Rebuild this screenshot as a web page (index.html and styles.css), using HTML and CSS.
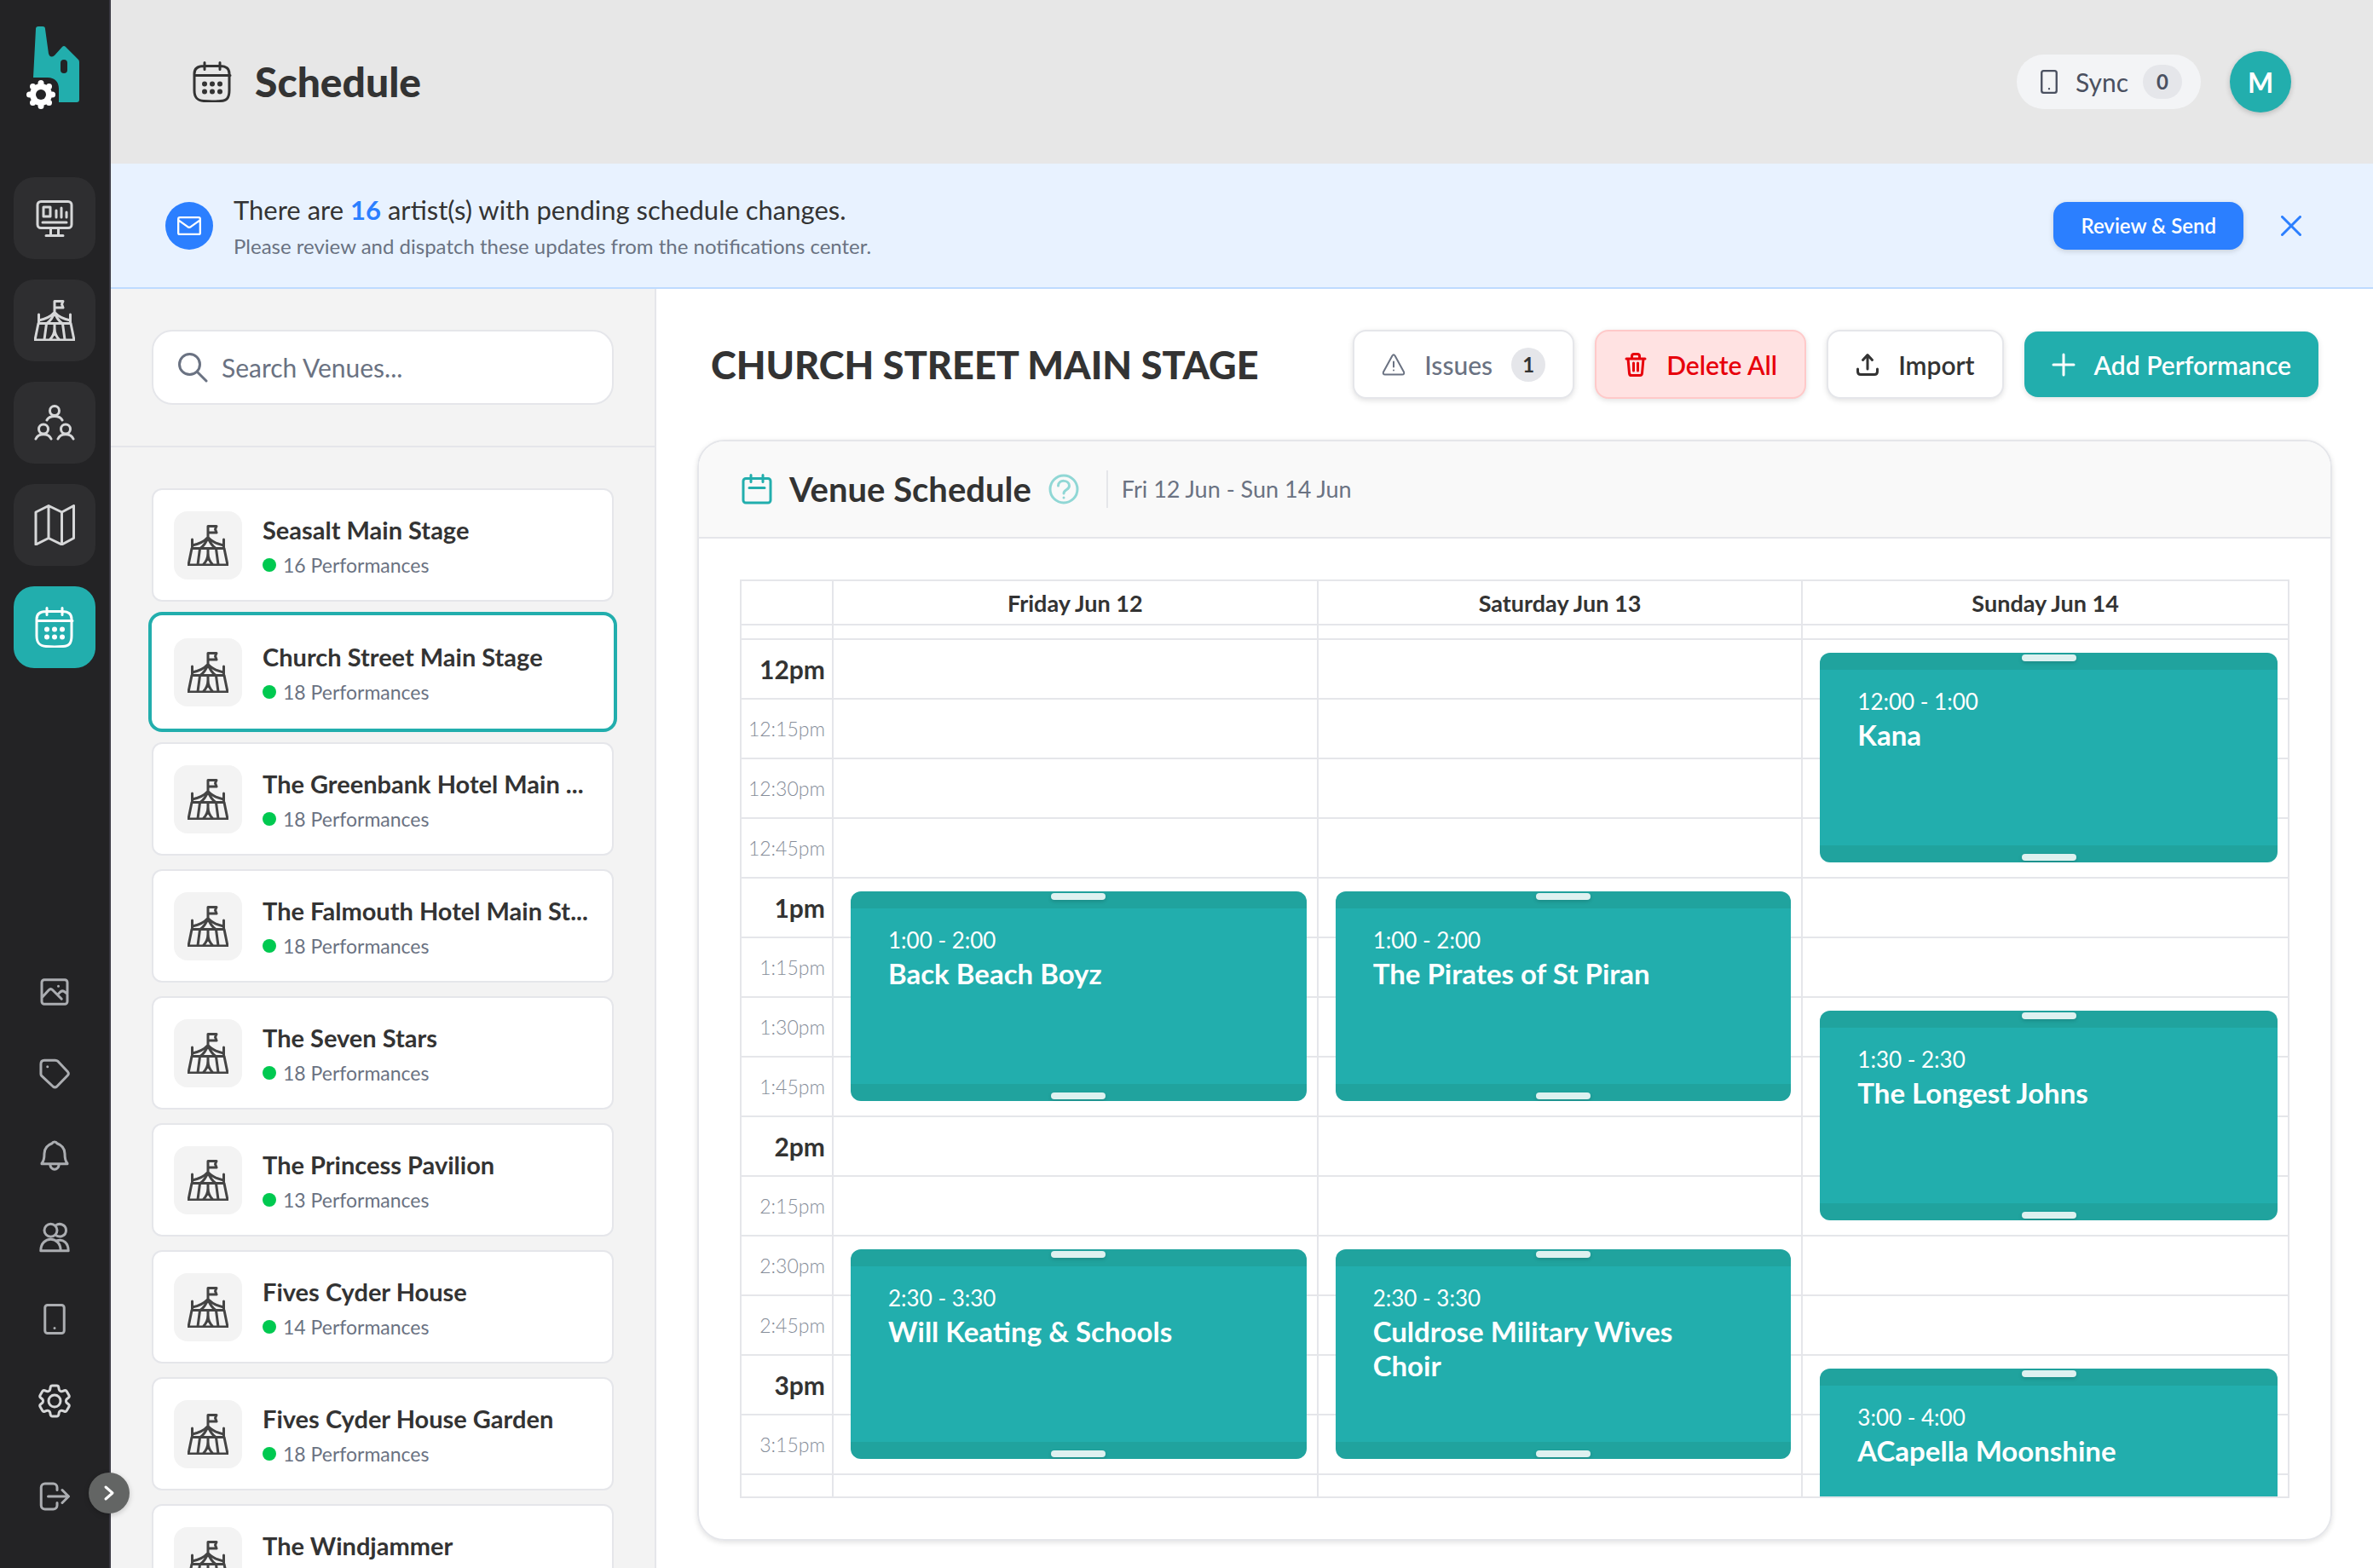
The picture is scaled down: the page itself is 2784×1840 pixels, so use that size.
FILE: index.html
```html
<!DOCTYPE html>
<html lang="en">

<head>
    <meta charset="UTF-8">
    <meta name="viewport" content="width=device-width, initial-scale=1.0">
    <title>Schedule</title>
    <link rel="stylesheet" href="styles.css">
</head>

<body>
    <!-- Shared icons -->
    <svg class="icon-defs" aria-hidden="true">
        <symbol id="icon-tent" viewBox="0 0 48 48">
            <path d="M24 15V1.500h10l-1.500 3.500 1.500 4H24M5.500 17v10.500M42.500 17v10.500M24 14.500c-4 4.500-11 8-18.500 9.500M24 14.500c4 4.500 11 8 18.500 9.500M24 14.500c-2 6-5 10-9 13M24 14.500c2 6 5 10 9 13M5 27.500h38l4 19.500H1zM14.500 28L12 46.500M33.500 28L36 46.500M24 28v6M24 33c0 5-2 10-5.500 13.500M24 33c0 5 2 10 5.500 13.500" />
        </symbol>
        <symbol id="icon-calendar" viewBox="0 0 48 48">
            <path d="M14 5.500h20c6 0 10 3 10 9V34c0 9-3 12-10 12.500-6 .6-14 .6-20 0C7 46 3 43 3 34V14.500c0-6 4-9 11-9zM3 16.500h42M15 1.500v8M33 1.500v8" />
            <path class="dots" d="M15 26.500h.01M24 26.500h.01M33 26.500h.01M15 35.500h.01M24 35.500h.01M33 35.500h.01" />
        </symbol>
        <symbol id="icon-tablet" viewBox="0 0 24 24">
            <path d="M6.500 1h11a2 2 0 0 1 2 2v18a2 2 0 0 1-2 2h-11a2 2 0 0 1-2-2V3a2 2 0 0 1 2-2zM12 19h.01" />
        </symbol>
    </svg>

    <aside class="sidebar">
        <a href="#" class="logo" aria-label="Home">
            <svg viewBox="0 0 64 98">
                <path fill="#22aead" d="M12 3q0-3 3-3h5q3 0 3 3l4 29q2 6 7 2l9-10q2-2 4 0l15 15q1 1 1 3v44q0 3-3 3H39V73C39 65 34 60 26 60H9z" />
                <rect x="41" y="39" width="8" height="16" rx="4" fill="#232325" />
                <g fill="#fff">
                    <circle cx="18" cy="66.500" r="3.500" />
                    <circle cx="27.500" cy="70.500" r="3.500" />
                    <circle cx="31.500" cy="80" r="3.500" />
                    <circle cx="27.500" cy="89.500" r="3.500" />
                    <circle cx="18" cy="93.500" r="3.500" />
                    <circle cx="8.500" cy="89.500" r="3.500" />
                    <circle cx="4.500" cy="80" r="3.500" />
                    <circle cx="8.500" cy="70.500" r="3.500" />
                    <circle cx="18" cy="80" r="13" />
                </g>
                <circle cx="18" cy="80" r="6" fill="#232325" />
            </svg>
        </a>
        <nav class="main-nav">
            <a href="#" class="nav-btn" aria-label="Dashboard">
                <svg viewBox="0 0 48 48">
                    <path d="M8 4.500h32a4 4 0 0 1 4 4v23a4 4 0 0 1-4 4H8a4 4 0 0 1-4-4v-23a4 4 0 0 1 4-4zM11 11h8v11h-8zM26 15v8M32 12v11M38 17v6M10 29h28M19.500 36v8M28.500 36v8M14 44.500h20" />
                </svg>
            </a>
            <a href="#" class="nav-btn" aria-label="Venues"><svg><use href="#icon-tent" /></svg></a>
            <a href="#" class="nav-btn" aria-label="Artists">
                <svg viewBox="0 0 48 48">
                    <circle cx="24" cy="10" r="5.500" />
                    <circle cx="11" cy="31.500" r="5.500" />
                    <circle cx="37" cy="31.500" r="5.500" />
                    <path d="M15 21c3-6 15-6 18 0M2 43c3-7 15-7 18 0M28 43c3-7 15-7 18 0" />
                </svg>
            </a>
            <a href="#" class="nav-btn" aria-label="Map">
                <svg viewBox="0 0 48 48">
                    <path d="M2 9l15-7.500 15.500 7.500L46.500 1.500v38L32.500 47 17 39.500 2 47zM17 1.500v38M32.500 9v38" />
                </svg>
            </a>
            <a href="#" class="nav-btn active" aria-label="Schedule"><svg><use href="#icon-calendar" /></svg></a>
        </nav>
        <nav class="tool-nav">
            <a href="#" aria-label="Media">
                <svg viewBox="0 0 24 24">
                    <path d="M4 2.500h16a2 2 0 0 1 2 2v15a2 2 0 0 1-2 2H4a2 2 0 0 1-2-2v-15a2 2 0 0 1 2-2zM2.500 16l5-5.500q1.500-1.500 3 0l7 7M14.500 14l2-2q2-1.500 3.500 0l2 1.500M15 7.500h.01" />
                </svg>
            </a>
            <a href="#" aria-label="Tags">
                <svg viewBox="0 0 24 24">
                    <path d="M4 1.500h8.500c1 0 1.500.2 2.200.8l7.500 8c.9 1 .9 2 0 3l-8.400 8.700c-1 .8-2 .8-3 0L2 13.800c-.5-.5-.7-1-.7-1.700V4.500c0-2 1-3 2.700-3zM6.500 6.500h.01" />
                </svg>
            </a>
            <a href="#" aria-label="Notifications">
                <svg viewBox="0 0 24 24">
                    <path d="M10 2.500c.7-1.500 3.300-1.500 4 0 4 1.500 6 4.500 6 8 0 3.500.3 6 2 7.500v.5H2V18c1.700-1.500 2-4 2-7.500 0-3.500 2-6.500 6-8zM8.500 19c.5 5 6.500 5 7 0" />
                </svg>
            </a>
            <a href="#" aria-label="Users">
                <svg viewBox="0 0 24 24">
                    <circle cx="9" cy="6.500" r="5" />
                    <path d="M1.200 22.500c0-12 15.600-12 15.600 0zM13 2.600c3-2.200 8-.5 8 3.900s-5 6-8 3.900M14 14.500c5-1.500 8.800 2 8.800 8H17" />
                </svg>
            </a>
            <a href="#" aria-label="Devices"><svg><use href="#icon-tablet" /></svg></a>
            <a href="#" class="settings" aria-label="Settings">
                <svg viewBox="0 0 24 24">
                    <path d="M9.594 3.940c.090-.542.560-.940 1.110-.940h2.593c.550 0 1.020.398 1.110.940l.213 1.281c.063.374.313.686.645.870.074.040.147.083.220.127.325.196.720.257 1.075.124l1.217-.456a1.125 1.125 0 0 1 1.370.490l1.296 2.247a1.125 1.125 0 0 1-.260 1.431l-1.003.827c-.293.241-.438.613-.430.992a7.723 7.723 0 0 1 0 .255c-.008.378.137.750.430.991l1.004.827c.424.350.534.955.260 1.430l-1.298 2.247a1.125 1.125 0 0 1-1.369.491l-1.217-.456c-.355-.133-.750-.072-1.076.124a6.470 6.470 0 0 1-.220.128c-.331.183-.581.495-.644.869l-.213 1.281c-.090.543-.560.940-1.110.940h-2.594c-.550 0-1.019-.398-1.110-.940l-.213-1.281c-.062-.374-.312-.686-.644-.870a6.520 6.520 0 0 1-.220-.127c-.325-.196-.720-.257-1.076-.124l-1.217.456a1.125 1.125 0 0 1-1.369-.490l-1.297-2.247a1.125 1.125 0 0 1 .260-1.431l1.004-.827c.292-.240.437-.613.430-.991a6.932 6.932 0 0 1 0-.255c.007-.380-.138-.751-.430-.992l-1.004-.827a1.125 1.125 0 0 1-.260-1.430l1.297-2.247a1.125 1.125 0 0 1 1.370-.491l1.216.456c.356.133.751.072 1.076-.124.072-.044.146-.086.220-.128.332-.183.582-.495.644-.869l.214-1.280Z" />
                    <circle cx="12" cy="12" r="3.500" />
                </svg>
            </a>
        </nav>
        <div class="sidebar-footer">
            <a href="#" aria-label="Log out">
                <svg viewBox="0 0 24 24">
                    <path d="M14 7V5a3 3 0 0 0-3-3H4.500a3 3 0 0 0-3 3v14a3 3 0 0 0 3 3H11a3 3 0 0 0 3-3v-2M7 12h15.500M18 7l5 5-5 5" />
                </svg>
            </a>
            <button type="button" class="expand-btn" aria-label="Expand menu">
                <svg viewBox="0 0 24 24"><path d="M8 5l8 7-8 7" /></svg>
            </button>
        </div>
    </aside>

    <div class="page">
        <header class="top-bar">
            <svg class="top-icon"><use href="#icon-calendar" /></svg>
            <h1>Schedule</h1>
            <button type="button" class="sync-btn">
                <svg><use href="#icon-tablet" /></svg>
                Sync
                <span class="sync-count">0</span>
            </button>
            <button type="button" class="avatar">M</button>
        </header>

        <section class="banner">
            <span class="banner-icon">
                <svg viewBox="0 0 24 24"><path d="M2.500 3.500h19a1.500 1.500 0 0 1 1.500 1.500v14a1.500 1.500 0 0 1-1.500 1.500h-19A1.500 1.500 0 0 1 1 19V5a1.500 1.500 0 0 1 1.500-1.500zM1.500 6.500l9 6.500q1.500 1 3 0l9-6.500" /></svg>
            </span>
            <div class="banner-text">
                <p class="banner-title">There are <strong>16</strong> artist(s) with pending schedule changes.</p>
                <p class="banner-sub">Please review and dispatch these updates from the notifications center.</p>
            </div>
            <button type="button" class="review-btn">Review &amp; Send</button>
            <button type="button" class="close-btn" aria-label="Dismiss">
                <svg viewBox="0 0 24 24"><path d="M1.500 1.500l21 21M22.500 1.500l-21 21" /></svg>
            </button>
        </section>

        <div class="content">
            <section class="venues">
                <div class="venue-search">
                    <label class="search-box">
                        <svg viewBox="0 0 36 36"><circle cx="14.500" cy="14.500" r="12" /><path d="M23.500 23.500L34 34" /></svg>
                        <input type="text" placeholder="Search Venues..." aria-label="Search venues">
                    </label>
                </div>
                <ul class="venue-list">
                    <li><a href="#" class="venue-card"><span class="venue-icon"><svg><use href="#icon-tent" /></svg></span><span class="venue-info"><span class="venue-name">Seasalt Main Stage</span><span class="venue-count">16 Performances</span></span></a></li>
                    <li><a href="#" class="venue-card selected"><span class="venue-icon"><svg><use href="#icon-tent" /></svg></span><span class="venue-info"><span class="venue-name">Church Street Main Stage</span><span class="venue-count">18 Performances</span></span></a></li>
                    <li><a href="#" class="venue-card"><span class="venue-icon"><svg><use href="#icon-tent" /></svg></span><span class="venue-info"><span class="venue-name">The Greenbank Hotel Main ...</span><span class="venue-count">18 Performances</span></span></a></li>
                    <li><a href="#" class="venue-card"><span class="venue-icon"><svg><use href="#icon-tent" /></svg></span><span class="venue-info"><span class="venue-name">The Falmouth Hotel Main St...</span><span class="venue-count">18 Performances</span></span></a></li>
                    <li><a href="#" class="venue-card"><span class="venue-icon"><svg><use href="#icon-tent" /></svg></span><span class="venue-info"><span class="venue-name">The Seven Stars</span><span class="venue-count">18 Performances</span></span></a></li>
                    <li><a href="#" class="venue-card"><span class="venue-icon"><svg><use href="#icon-tent" /></svg></span><span class="venue-info"><span class="venue-name">The Princess Pavilion</span><span class="venue-count">13 Performances</span></span></a></li>
                    <li><a href="#" class="venue-card"><span class="venue-icon"><svg><use href="#icon-tent" /></svg></span><span class="venue-info"><span class="venue-name">Fives Cyder House</span><span class="venue-count">14 Performances</span></span></a></li>
                    <li><a href="#" class="venue-card"><span class="venue-icon"><svg><use href="#icon-tent" /></svg></span><span class="venue-info"><span class="venue-name">Fives Cyder House Garden</span><span class="venue-count">18 Performances</span></span></a></li>
                    <li><a href="#" class="venue-card"><span class="venue-icon"><svg><use href="#icon-tent" /></svg></span><span class="venue-info"><span class="venue-name">The Windjammer</span></span></a></li>
                </ul>
            </section>

            <main class="main">
                <div class="toolbar">
                    <h2>CHURCH STREET MAIN STAGE</h2>
                    <button type="button" class="btn btn-issues">
                        <svg viewBox="0 0 28 28"><path d="M12.400 3.500q1.600-2.500 3.200 0L26 22.500q1 3-2 3H4q-3 0-2-3zM14 10.500v6M14 20.500h.01" /></svg>
                        Issues
                        <span class="issue-count">1</span>
                    </button>
                    <button type="button" class="btn btn-delete">
                        <svg viewBox="0 0 28 28"><path d="M3 7h22M5 7l1.500 17q.2 2.500 2.500 2.500h10q2.300 0 2.500-2.500L23 7M9.500 6.500V4q0-2.500 2.500-2.500h4q2.500 0 2.500 2.500v2.500M11.500 12v9M16.500 12v9" /></svg>
                        Delete All
                    </button>
                    <button type="button" class="btn">
                        <svg viewBox="0 0 28 28"><path d="M14 19V3M8.500 8.500L14 2.500l5.500 6M2.500 19v3q0 3.500 3.500 3.500h16q3.500 0 3.500-3.500v-3" /></svg>
                        Import
                    </button>
                    <button type="button" class="btn btn-add">
                        <svg viewBox="0 0 28 28"><path d="M14 2v24M2 14h24" /></svg>
                        Add Performance
                    </button>
                </div>

                <section class="panel">
                    <div class="panel-header">
                        <svg class="panel-icon" viewBox="0 0 36 36"><path d="M5 5.500h26a3 3 0 0 1 3 3V31a3 3 0 0 1-3 3H5a3 3 0 0 1-3-3V8.500a3 3 0 0 1 3-3zM11 1.500v8M25 1.500v8M9 16.500h18" /></svg>
                        <h3>Venue Schedule</h3>
                        <button type="button" class="help-btn" aria-label="Help">
                            <svg viewBox="0 0 36 36"><circle cx="18" cy="18" r="16" /><path d="M11.500 14c0-8 13-7 13 0 0 5-6.500 4.500-6.500 9M18 28h.01" /></svg>
                        </button>
                        <p class="panel-dates">Fri 12 Jun - Sun 14 Jun</p>
                    </div>
                    <div class="panel-body">
                        <div class="calendar">
                            <table>
                                <thead>
                                    <tr>
                                        <th class="time-col"></th>
                                        <th>Friday Jun 12</th>
                                        <th>Saturday Jun 13</th>
                                        <th>Sunday Jun 14</th>
                                    </tr>
                                </thead>
                                <tbody>
                                    <tr class="partial"><th></th><td></td><td></td><td></td></tr>
                                    <tr>
                                        <th class="hour">12pm</th><td></td><td></td>
                                        <td><div class="event"><span class="event-time">12:00 - 1:00</span><strong>Kana</strong></div></td>
                                    </tr>
                                    <tr><th>12:15pm</th><td></td><td></td><td></td></tr>
                                    <tr><th>12:30pm</th><td></td><td></td><td></td></tr>
                                    <tr><th>12:45pm</th><td></td><td></td><td></td></tr>
                                    <tr>
                                        <th class="hour">1pm</th>
                                        <td><div class="event"><span class="event-time">1:00 - 2:00</span><strong>Back Beach Boyz</strong></div></td>
                                        <td><div class="event"><span class="event-time">1:00 - 2:00</span><strong>The Pirates of St Piran</strong></div></td>
                                        <td></td>
                                    </tr>
                                    <tr><th>1:15pm</th><td></td><td></td><td></td></tr>
                                    <tr>
                                        <th>1:30pm</th><td></td><td></td>
                                        <td><div class="event"><span class="event-time">1:30 - 2:30</span><strong>The Longest Johns</strong></div></td>
                                    </tr>
                                    <tr><th>1:45pm</th><td></td><td></td><td></td></tr>
                                    <tr><th class="hour">2pm</th><td></td><td></td><td></td></tr>
                                    <tr><th>2:15pm</th><td></td><td></td><td></td></tr>
                                    <tr>
                                        <th>2:30pm</th>
                                        <td><div class="event"><span class="event-time">2:30 - 3:30</span><strong>Will Keating &amp; Schools</strong></div></td>
                                        <td><div class="event"><span class="event-time">2:30 - 3:30</span><strong>Culdrose Military Wives Choir</strong></div></td>
                                        <td></td>
                                    </tr>
                                    <tr><th>2:45pm</th><td></td><td></td><td></td></tr>
                                    <tr>
                                        <th class="hour">3pm</th><td></td><td></td>
                                        <td><div class="event"><span class="event-time">3:00 - 4:00</span><strong>ACapella Moonshine</strong></div></td>
                                    </tr>
                                    <tr><th>3:15pm</th><td></td><td></td><td></td></tr>
                                    <tr><th></th><td></td><td></td><td></td></tr>
                                </tbody>
                            </table>
                        </div>
                    </div>
                </section>
            </main>
        </div>
    </div>
</body>

</html>
```

FILE: styles.css
```css
* {
    box-sizing: border-box;
}

body {
    margin: 0;
    height: 100vh;
    display: flex;
    overflow: hidden;
    font-family: Lato, "Open Sans", sans-serif;
    font-size: 30px;
    color: #333;
    background-color: #fff;
}

h1,
h2,
h3,
p,
ul {
    margin: 0;
    padding: 0;
}

a {
    color: inherit;
    text-decoration: none;
}

button {
    font: inherit;
    color: inherit;
    border: none;
    padding: 0;
    cursor: pointer;
    display: flex;
    align-items: center;
    justify-content: center;
}

svg {
    display: block;
    flex-shrink: 0;
    fill: none;
    stroke: currentColor;
    stroke-width: 2;
    stroke-linecap: round;
    stroke-linejoin: round;
}

.icon-defs {
    position: absolute;
    width: 0;
    height: 0;
}

.dots {
    stroke-width: 6;
}

/* Sidebar */
.sidebar {
    width: 130px;
    flex-shrink: 0;
    display: flex;
    flex-direction: column;
    background-color: #232325;
    border-right: 2px solid #3a3942;
    color: #abadb1;
}

.logo {
    padding: 31px 0 0 30px;
    height: 208px;
}

.logo svg {
    width: 64px;
    height: 98px;
    stroke: none;
}

.main-nav {
    display: flex;
    flex-direction: column;
    align-items: center;
    gap: 24px;
}

.nav-btn {
    width: 96px;
    height: 96px;
    border-radius: 24px;
    display: flex;
    align-items: center;
    justify-content: center;
    background-color: #2e2e30;
    color: #d6d7d8;
}

.nav-btn svg {
    width: 48px;
    height: 48px;
    stroke-width: 3;
}

.nav-btn.active {
    background-color: #22aead;
    color: #fff;
}

.tool-nav {
    margin-top: auto;
    display: flex;
    flex-direction: column;
    align-items: center;
    gap: 60px;
}

.tool-nav svg,
.sidebar-footer svg {
    width: 36px;
    height: 36px;
}

.tool-nav .settings {
    color: #d6d7d8;
}

.tool-nav .settings svg {
    width: 48px;
    height: 48px;
    margin: -6px;
    stroke-width: 1.5;
}

.sidebar-footer {
    position: relative;
    padding: 76px 0 66px;
    display: flex;
    justify-content: center;
}

.expand-btn {
    position: absolute;
    right: -24px;
    bottom: 64px;
    width: 48px;
    height: 48px;
    border-radius: 50%;
    background-color: #636564;
    color: #fff;
    box-shadow: 0 2px 6px rgba(0, 0, 0, 0.2);
}

.sidebar-footer .expand-btn svg {
    width: 24px;
    height: 24px;
    stroke-width: 3;
}

/* Top bar */
.page {
    flex: 1;
    min-width: 0;
    display: flex;
    flex-direction: column;
}

.top-bar {
    height: 192px;
    flex-shrink: 0;
    padding: 0 96px 0 95px;
    display: flex;
    align-items: center;
    background-color: #e7e7e7;
}

.top-icon {
    width: 48px;
    height: 48px;
    margin-right: 26px;
    stroke-width: 3;
}

.top-bar h1 {
    flex: 1;
    font-size: 48px;
    line-height: 56px;
    font-weight: 900;
}

.sync-btn {
    height: 64px;
    padding: 0 22px 0 24px;
    margin-right: 34px;
    gap: 17px;
    border-radius: 32px;
    background-color: #f3f4f6;
    color: #4a5060;
}

.sync-btn svg {
    width: 28px;
    height: 28px;
}

.sync-count {
    width: 46px;
    line-height: 40px;
    border-radius: 20px;
    background-color: #e5e6ea;
    font-size: 24px;
    font-weight: bold;
}

.avatar {
    width: 72px;
    height: 72px;
    border-radius: 50%;
    background-color: #22aead;
    color: #fff;
    font-size: 32px;
    font-weight: bold;
    box-shadow: 0 2px 6px rgba(0, 0, 0, 0.2);
}

/* Notification banner */
.banner {
    height: 147px;
    flex-shrink: 0;
    padding: 0 80px 0 64px;
    display: flex;
    align-items: center;
    background-color: #e8f2ff;
    border-bottom: 2px solid #bedbff;
}

.banner-icon {
    width: 56px;
    height: 56px;
    border-radius: 50%;
    display: flex;
    align-items: center;
    justify-content: center;
    background-color: #2b7fff;
    color: #fff;
}

.banner-icon svg {
    width: 28px;
    height: 28px;
}

.banner-text {
    flex: 1;
    padding-left: 24px;
}

.banner-title {
    font-size: 31px;
    line-height: 48px;
}

.banner-title strong {
    color: #2b7fff;
}

.banner-sub {
    font-size: 24px;
    line-height: 38px;
    color: #6a7282;
}

.review-btn {
    height: 56px;
    padding: 0 32px;
    border-radius: 16px;
    background-color: #2b7fff;
    color: #fff;
    font-size: 24px;
    font-weight: 600;
    box-shadow: 0 2px 6px rgba(0, 0, 0, 0.15);
}

.close-btn {
    width: 32px;
    height: 32px;
    margin-left: 40px;
    background: none;
    color: #2b7fff;
}

.close-btn svg {
    width: 24px;
    height: 24px;
    stroke-width: 3;
}

/* Venue list */
.content {
    flex: 1;
    min-height: 0;
    display: flex;
}

.venues {
    width: 640px;
    flex-shrink: 0;
    overflow: hidden;
    background-color: #f3f3f3;
    border-right: 2px solid #e5e6ea;
}

.venue-search {
    padding: 48px;
    border-bottom: 2px solid #e5e6ea;
}

.search-box {
    height: 88px;
    padding: 0 28px;
    display: flex;
    align-items: center;
    gap: 16px;
    background-color: #fff;
    border: 2px solid #e5e6ea;
    border-radius: 24px;
    color: #6a7282;
}

.search-box svg {
    width: 36px;
    height: 36px;
    stroke-width: 3;
}

.search-box input {
    flex: 1;
    min-width: 0;
    border: none;
    outline: none;
    padding: 0;
    font: inherit;
    background: none;
}

.search-box input::placeholder {
    color: #6a7282;
}

.venue-list {
    list-style-type: none;
    padding: 48px;
    display: flex;
    flex-direction: column;
    gap: 16px;
}

.venue-card {
    height: 133px;
    padding: 0 24px;
    display: flex;
    align-items: center;
    gap: 24px;
    background-color: #fff;
    border: 2px solid #e5e6ea;
    border-radius: 12px;
}

.venue-card.selected {
    border-color: #fff;
    box-shadow: 0 0 0 4px #22aead;
}

.venue-icon {
    width: 80px;
    height: 80px;
    flex-shrink: 0;
    border-radius: 16px;
    display: flex;
    align-items: center;
    justify-content: center;
    background-color: #f3f3f3;
    color: #444;
}

.venue-icon svg {
    width: 48px;
    height: 48px;
    stroke-width: 3;
}

.venue-info {
    min-width: 0;
    height: 82px;
    padding-top: 2px;
    display: flex;
    flex-direction: column;
}

.venue-name {
    font-size: 29px;
    line-height: 42px;
    font-weight: bold;
    white-space: nowrap;
}

.venue-count {
    display: flex;
    align-items: center;
    gap: 8px;
    font-size: 23px;
    line-height: 40px;
    color: #6a7282;
}

.venue-count::before {
    content: "";
    width: 16px;
    height: 16px;
    border-radius: 50%;
    background-color: #00c950;
}

/* Main area */
.main {
    flex: 1;
    min-width: 0;
    padding: 48px 48px 32px;
    display: flex;
    flex-direction: column;
    gap: 48px;
}

.toolbar {
    padding: 0 16px;
    display: flex;
    align-items: center;
    gap: 24px;
}

.toolbar h2 {
    flex: 1;
    font-size: 45px;
    font-weight: 900;
    white-space: nowrap;
}

.btn {
    height: 81px;
    padding: 0 32px;
    gap: 22px;
    background-color: #fff;
    border: 2px solid #e5e6ea;
    border-radius: 16px;
    font-weight: 600;
    white-space: nowrap;
    box-shadow: 0 2px 6px rgba(0, 0, 0, 0.12);
}

.btn svg {
    width: 28px;
    height: 28px;
    stroke-width: 3;
}

.btn-issues {
    color: #6a7282;
    font-weight: 500;
}

.btn-issues svg {
    stroke-width: 2;
}

.issue-count {
    width: 40px;
    line-height: 40px;
    border-radius: 50%;
    background-color: #e5e6ea;
    color: #333;
    font-size: 24px;
    font-weight: bold;
}

.btn-delete {
    background-color: #ffe2e2;
    border-color: #ffc9c9;
    color: #e7000b;
}

.btn-add {
    height: 77px;
    border: none;
    background-color: #22aead;
    color: #fff;
}

/* Schedule panel */
.panel {
    flex: 1;
    min-height: 0;
    display: flex;
    flex-direction: column;
    overflow: hidden;
    border: 2px solid #e5e6ea;
    border-radius: 32px;
    box-shadow: 0 2px 6px rgba(0, 0, 0, 0.12);
}

.panel-header {
    height: 114px;
    flex-shrink: 0;
    padding: 0 50px;
    display: flex;
    align-items: center;
    gap: 20px;
    background-color: #f9f9f9;
    border-bottom: 2px solid #e5e6ea;
}

.panel-icon {
    width: 36px;
    height: 36px;
    color: #22aead;
    stroke-width: 3;
}

.panel-header h3 {
    font-size: 40px;
}

.help-btn {
    background: none;
    color: #90d7d5;
}

.help-btn svg {
    width: 36px;
    height: 36px;
    stroke-width: 3;
}

.panel-dates {
    margin-left: 12px;
    padding-left: 16px;
    font-size: 27px;
    line-height: 44px;
    border-left: 2px solid #e5e6ea;
    color: #6a7282;
}

.panel-body {
    flex: 1;
    min-height: 0;
    padding: 48px;
    display: flex;
}

/* Calendar */
.calendar {
    flex: 1;
    overflow: hidden;
    border: 2px solid #e5e6ea;
}

.calendar table {
    width: 100%;
    table-layout: fixed;
    border-spacing: 0;
}

.calendar tr {
    height: 70px;
}

.calendar th,
.calendar td {
    position: relative;
    padding: 0;
    border-right: 2px solid #e5e6ea;
    border-bottom: 2px solid #e5e6ea;
}

.calendar th:last-child,
.calendar td:last-child {
    border-right: none;
}

.calendar thead tr {
    height: 52px;
}

.calendar thead th {
    font-size: 27px;
}

.calendar .time-col {
    width: 108px;
}

.calendar tbody th {
    padding-right: 8px;
    text-align: right;
    font-size: 23px;
    font-weight: 300;
    color: #868d99;
}

.calendar tbody .hour {
    font-size: 30px;
    font-weight: bold;
    color: #333;
}

.calendar .partial {
    height: 17px;
}

/* One hour long event, laid over four quarter-hour rows */
.event {
    position: absolute;
    z-index: 1;
    top: 15px;
    left: 20px;
    right: 12px;
    height: 246px;
    padding: 38px 88px 0 44px;
    border-radius: 12px;
    overflow: hidden;
    color: #fff;
    background: linear-gradient(#20a39e 20px, #22aead 20px, #22aead 226px, #20a39e 226px);
}

/* Drag handles */
.event::before,
.event::after {
    content: "";
    position: absolute;
    left: calc(50% - 32px);
    width: 64px;
    height: 8px;
    border-radius: 4px;
    background-color: #def1f0;
    box-shadow: 0 2px 4px rgba(0, 0, 0, 0.15);
}

.event::before {
    top: 2px;
}

.event::after {
    bottom: 2px;
}

.event-time {
    display: block;
    font-size: 26px;
    line-height: 38px;
}

.event strong {
    display: block;
    font-size: 33px;
    line-height: 40px;
}
```
